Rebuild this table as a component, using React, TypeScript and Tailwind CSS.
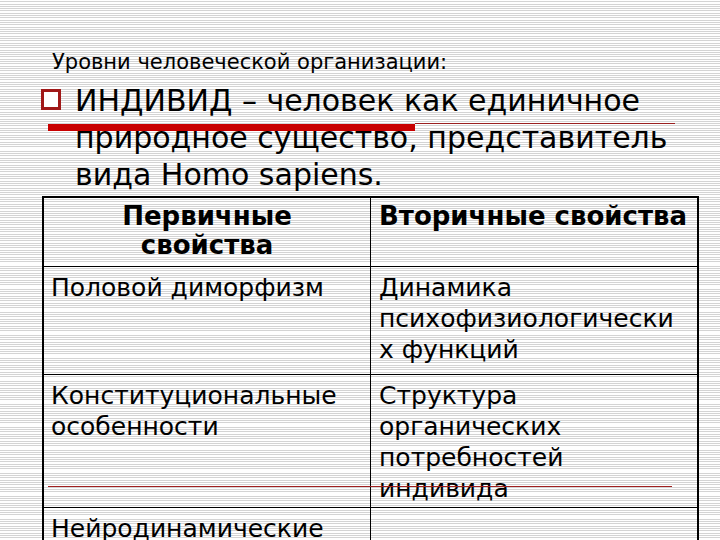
import React from 'react';

const rows = [
  { left: ['Половой диморфизм'], right: ['Динамика', 'психофизиологически', 'х функций'] },
  { left: ['Конституциональные', 'особенности'], right: ['Структура', 'органических', 'потребностей', 'индивида'] },
  { left: ['Нейродинамические'], right: [] as string[] },
];

export default function App() {
  return (
    <div className="relative w-[720px] h-[540px] overflow-hidden bg-[repeating-linear-gradient(to_bottom,#ffffff_0px,#ffffff_1.3px,#d4d4d4_1.3px,#d4d4d4_2.3px)] font-['DejaVu_Sans',sans-serif] text-black">
      {/* Title */}
      <p className="pl-[52px] pt-[50px] text-[21px] leading-[24px]">Уровни человеческой организации:</p>

      {/* Bullet */}
      <div className="flex items-start mt-[8px] pl-[41px]">
        <div className="mt-[7px] w-[20px] h-[21px] border-[3px] border-[#a01818] bg-white shrink-0" />
        <p className="ml-[14px] text-[30px] leading-[37px]">
          ИНДИВИД – человек как единичное
          <br />
          природное существо, представитель
          <br />
          вида Homo sapiens.
        </p>
      </div>

      {/* Table */}
      <div className="ml-[42px] mt-[3px] w-[657px] border-2 border-black grid grid-cols-[327px_1fr] grid-rows-[69px_108px_133px_60px] text-[25px] leading-[31px]">
        <div className="border-r border-b border-black pt-[4px] text-center font-bold text-[26px] leading-[29px]">
          Первичные
          <br />
          свойства
        </div>
        <div className="border-b border-black pt-[4px] pl-[8px] font-bold text-[26px] leading-[29px] whitespace-nowrap">
          Вторичные свойства
        </div>
        {rows.map((r, i) => (
          <React.Fragment key={i}>
            <div className={`border-r border-black pt-[5px] pl-[7px] ${i < rows.length - 1 ? 'border-b' : ''}`}>
              {r.left.map((t) => (
                <div key={t}>{t}</div>
              ))}
            </div>
            <div className={`border-black pt-[5px] pl-[8px] ${i < rows.length - 1 ? 'border-b' : ''}`}>
              {r.right.map((t) => (
                <div key={t}>{t}</div>
              ))}
            </div>
          </React.Fragment>
        ))}
      </div>

      {/* Red strokes drawn over the slide */}
      <div className="absolute left-[48px] top-[124px] w-[367px] h-[7px] bg-[#c80000]" />
      <div className="absolute left-[415px] top-[123px] w-[260px] h-px bg-[#9a2020]" />
      <div className="absolute left-[48px] top-[486px] w-[624px] h-px bg-[#a02020]" />
    </div>
  );
}
